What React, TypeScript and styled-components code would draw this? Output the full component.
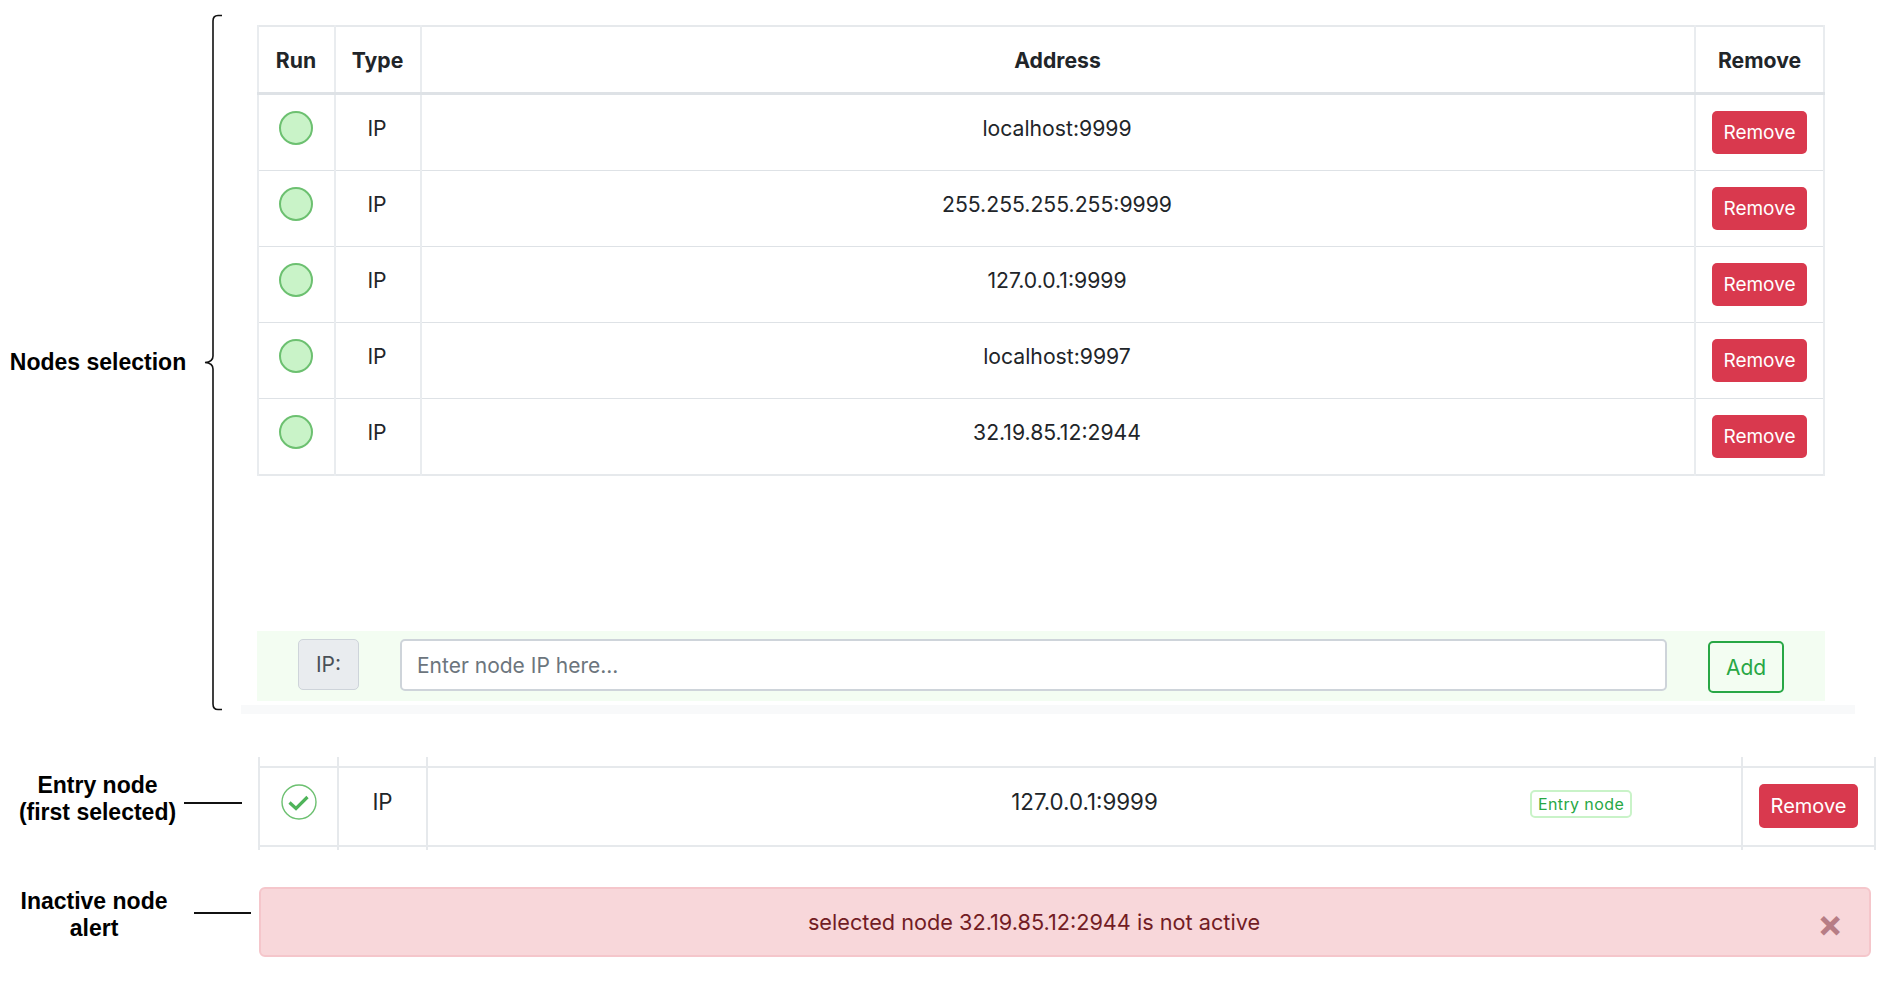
import React from 'react';
import styled, { createGlobalStyle } from 'styled-components';

const nodes = ['localhost:9999', '255.255.255.255:9999', '127.0.0.1:9999', 'localhost:9997', '32.19.85.12:2944'];

const GlobalStyle = createGlobalStyle`
	html, body {
		margin: 0;
		padding: 0;
		background: #fff;
	}
	body {
		font-family: Inter, "Liberation Sans", sans-serif;
		color: #212529;
	}
`;

const App: React.FC = () => (
	<Page>
		<GlobalStyle />
		<SelectionSection>
			<SelectionLabel>Nodes selection</SelectionLabel>
			<Brace width="30" height="700" viewBox="0 0 30 700">
				<path
					d="M22 3.5 H18 Q13 3.5 13 9 V344 Q13 350 5 350.5 Q13 351 13 357 V692 Q13 697.5 18 697.5 H22"
					fill="none"
					stroke="#111"
					strokeWidth="1.6"
				/>
			</Brace>
			<SelectionBody>
				<NodesTable>
					<colgroup>
						<col width="77" />
						<col width="86" />
						<col width="1274" />
						<col width="129" />
					</colgroup>
					<thead>
						<tr>
							<HeadCell>Run</HeadCell>
							<HeadCell>Type</HeadCell>
							<HeadCell>Address</HeadCell>
							<HeadCell>Remove</HeadCell>
						</tr>
					</thead>
					<tbody>
						{nodes.map(address => (
							<tr key={address}>
								<Cell><RunDot /></Cell>
								<Cell>IP</Cell>
								<Cell>{address}</Cell>
								<Cell><RemoveButton>Remove</RemoveButton></Cell>
							</tr>
						))}
					</tbody>
				</NodesTable>
				<AddBar>
					<AddPrefix>IP:</AddPrefix>
					<AddInput placeholder="Enter node IP here..." />
					<AddButton>Add</AddButton>
				</AddBar>
				<Divider />
			</SelectionBody>
		</SelectionSection>

		<EntrySection>
			<EntryLabel>Entry node<br />(first selected)</EntryLabel>
			<EntryConnector />
			<EntryTable>
				<colgroup>
					<col width="79" />
					<col width="89" />
					<col width="1315" />
					<col width="133" />
				</colgroup>
				<tbody>
					<StubRow $height={9}><td /><td /><td /><td /></StubRow>
					<tr>
						<EntryCell>
							<CheckIcon width="36" height="36" viewBox="0 0 36 36">
								<circle cx="18" cy="18" r="17" fill="none" stroke="#6cc070" strokeWidth="1.4" />
								<path d="M8.5 18.5 L15 24.5 L26.5 13" fill="none" stroke="#4fb45a" strokeWidth="3.2" />
							</CheckIcon>
						</EntryCell>
						<EntryCell><EntryText>IP</EntryText></EntryCell>
						<AddressCell>
							<EntryText>127.0.0.1:9999</EntryText>
							<EntryBadge>Entry node</EntryBadge>
						</AddressCell>
						<EntryCell><RemoveButton $large>Remove</RemoveButton></EntryCell>
					</tr>
					<StubRow $height={3}><td /><td /><td /><td /></StubRow>
				</tbody>
			</EntryTable>
		</EntrySection>

		<AlertSection>
			<AlertLabel>Inactive node<br />alert</AlertLabel>
			<AlertConnector />
			<Alert>
				selected node 32.19.85.12:2944 is not active
				<CloseButton>×</CloseButton>
			</Alert>
		</AlertSection>
	</Page>
);

export default App;

// ================== styled elements =====================

const Page = styled('div')`
	width: 1894px;
	height: 988px;
	overflow: hidden;
`;

const SelectionSection = styled('section')`
	display: flex;
	align-items: center;
	padding-top: 11px;
`;

const Label = styled('div')`
	font-family: "Liberation Sans", Arial, sans-serif;
	font-weight: 700;
	font-size: 23px;
	line-height: 27px;
	color: #000;
	text-align: center;
`;

const SelectionLabel = styled(Label)`
	width: 196px;
	flex-shrink: 0;
`;

const Brace = styled('svg')`
	flex-shrink: 0;
	align-self: flex-start;
	margin: 1px 27px 0 4px;
`;

const SelectionBody = styled('div')`
	width: 1568px;
	padding-top: 14px;
`;

const NodesTable = styled('table')`
	width: 1566px;
	table-layout: fixed;
	border-collapse: collapse;
	border: 2px solid #e6e9ec;
	font-size: 21.2px;
`;

const HeadCell = styled('th')`
	height: 65px;
	padding: 0;
	font-weight: 700;
	text-align: center;
	border-left: 2px solid #e9ecef;
	border-right: 2px solid #e9ecef;
	border-bottom: 3px solid #dee2e6;
	&:not(:last-child) {
		padding-right: 1px;
	}
`;

const Cell = styled('td')`
	height: 76px;
	box-sizing: border-box;
	padding: 16px 16px 16px;
	vertical-align: top;
	text-align: center;
	line-height: 34px;
	border-left: 2px solid #e9ecef;
	border-right: 2px solid #e9ecef;
	border-bottom: 1px solid #dee2e6;
	&:not(:last-child) {
		padding-right: 18px;
	}
`;

const RunDot = styled('div')`
	box-sizing: border-box;
	width: 34px;
	height: 34px;
	margin: 0 auto;
	border-radius: 50%;
	background: #c9f3c8;
	border: 2px solid #6cc070;
`;

const RemoveButton = styled('button')<{ $large?: boolean }>`
	display: block;
	width: ${props => props.$large ? 99 : 95}px;
	height: ${props => props.$large ? 44 : 43}px;
	margin: 0 auto;
	padding: 0;
	border: none;
	border-radius: 5px;
	background: #d9394e;
	color: #fff;
	font-family: inherit;
	font-size: ${props => props.$large ? 20 : 19}px;
`;

const AddBar = styled('div')`
	display: flex;
	height: 70px;
	box-sizing: border-box;
	margin-top: 155px;
	padding: 8px 41px 0;
	background: #f3fdf2;
`;

const AddPrefix = styled('div')`
	box-sizing: border-box;
	width: 61px;
	height: 51px;
	line-height: 49px;
	text-align: center;
	font-size: 21px;
	color: #495057;
	background: #e9ecef;
	border: 1px solid #ced4da;
	border-radius: 5px;
`;

const AddInput = styled('input')`
	box-sizing: border-box;
	width: 1267px;
	height: 52px;
	margin: 0 41px;
	padding: 0 15px;
	font-family: inherit;
	font-size: 21px;
	background: #fff;
	border: 2px solid #ced4da;
	border-radius: 5px;
	&::placeholder {
		color: #6c757d;
	}
`;

const AddButton = styled('button')`
	box-sizing: border-box;
	width: 76px;
	height: 52px;
	margin-top: 2px;
	padding: 0;
	font-family: inherit;
	font-size: 21px;
	color: #28a745;
	background: transparent;
	border: 2px solid #28a745;
	border-radius: 5px;
`;

const Divider = styled('div')`
	width: 1614px;
	height: 9px;
	margin: 4px 0 0 -16px;
	background: #f8f9fa;
`;

const EntrySection = styled('section')`
	display: flex;
	align-items: center;
	margin-top: 43px;
`;

const EntryLabel = styled(Label)`
	box-sizing: border-box;
	width: 184px;
	padding-left: 11px;
	margin-bottom: 10px;
	white-space: nowrap;
	flex-shrink: 0;
`;

const Connector = styled('div')`
	height: 2px;
	background: #111;
	flex-shrink: 0;
`;

const EntryConnector = styled(Connector)`
	width: 58px;
	margin: 0 16px 2px 0;
`;

const EntryTable = styled('table')`
	width: 1616px;
	table-layout: fixed;
	border-collapse: collapse;
	font-size: 22.3px;
	td {
		padding: 0;
		border-left: 2px solid #e6e9ec;
		border-right: 2px solid #e6e9ec;
	}
`;

const StubRow = styled('tr')<{ $height: number }>`
	td {
		height: ${props => props.$height}px;
	}
`;

const EntryCell = styled('td')`
	box-sizing: border-box;
	height: 79px;
	text-align: center;
	vertical-align: top;
	border-top: 2px solid #e6e9ec;
	border-bottom: 2px solid #e6e9ec;
	&& {
		padding-top: 16px;
		line-height: 36px;
	}
`;

const EntryText = styled('span')`
	display: block;
`;

const AddressCell = styled(EntryCell)`
	position: relative;
`;

const CheckIcon = styled('svg')`
	display: block;
	margin: 0 auto;
`;

const EntryBadge = styled('span')`
	position: absolute;
	top: 22px;
	right: 109px;
	box-sizing: border-box;
	width: 102px;
	height: 28px;
	line-height: 25px;
	text-align: center;
	font-size: 16px;
	letter-spacing: 0.4px;
	color: #28a745;
	border: 2px solid #c9f3c8;
	border-radius: 5px;
`;

const AlertSection = styled('section')`
	display: flex;
	align-items: center;
	margin-top: 37px;
`;

const AlertLabel = styled(Label)`
	width: 188px;
	margin: 0 6px 14px 0;
	flex-shrink: 0;
`;

const AlertConnector = styled(Connector)`
	width: 57px;
	margin: 0 8px 18px 0;
`;

const Alert = styled('div')`
	position: relative;
	box-sizing: border-box;
	width: 1612px;
	height: 70px;
	padding-right: 62px;
	line-height: 66px;
	text-align: center;
	font-size: 21.7px;
	color: #721c24;
	background: #f8d7da;
	border: 2px solid #f5c6cb;
	border-radius: 6px;
`;

const CloseButton = styled('span')`
	position: absolute;
	top: 0;
	right: 26px;
	font-size: 38px;
	font-weight: 700;
	line-height: 68px;
	color: #b77d85;
`;
